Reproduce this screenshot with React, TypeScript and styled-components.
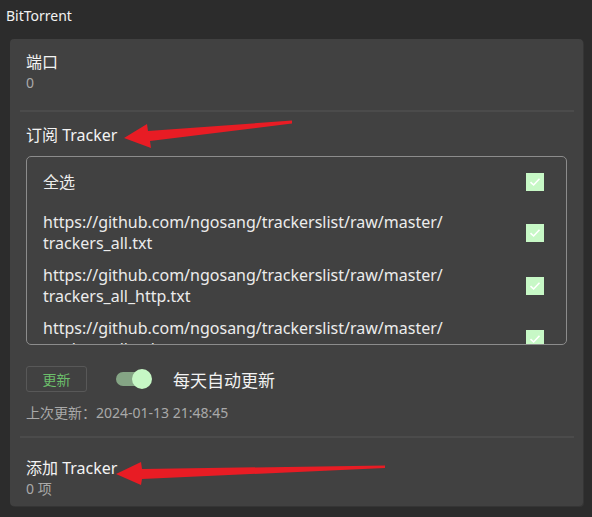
import React from 'react';
import styled, { createGlobalStyle } from 'styled-components';

const GlobalStyle = createGlobalStyle`
  html, body {
    margin: 0;
    padding: 0;
    background: #2c2c2c;
  }
  body {
    font-family: "Noto Sans", "Noto Sans CJK SC", sans-serif;
    color: #f0f0f0;
  }
`;

const Page = styled.div`
  position: relative;
  width: 592px;
  height: 517px;
  overflow: hidden;
  background: #2c2c2c;
`;

const Header = styled.div`
  padding: 6px 6px 0;
  font-size: 14px;
  line-height: 20px;
  color: #f2f2f2;
`;

const Card = styled.div`
  margin: 13px 9px 0 10px;
  background: #414141;
  border-radius: 4px;
  height: 467px;
  box-sizing: border-box;
  box-shadow: 1px 1px 0 #353535;
`;

const Section = styled.div<{ $top: number; $bottom: number }>`
  padding: ${p => p.$top}px 16px ${p => p.$bottom}px;
`;

const Title = styled.div`
  font-size: 16px;
  line-height: 22px;
  color: #f3f3f3;
`;

const Value = styled.div`
  font-size: 14px;
  line-height: 20px;
  color: #a9a9a9;
`;

const Divider = styled.div`
  height: 2px;
  margin: 0 9px 0 10px;
  background: #4b4b4b;
`;

const ListBox = styled.div`
  margin-top: 10px;
  height: 189px;
  box-sizing: border-box;
  border: 1px solid #8c8c8c;
  border-radius: 5px;
  padding: 1px 0 0;
  overflow: hidden;
`;

const Row = styled.div`
  display: flex;
  align-items: center;
  gap: 12px;
  min-height: 48px;
  box-sizing: border-box;
  padding: 5.5px 22px 5.5px 16px;
`;

const RowText = styled.div`
  flex: 1;
  font-size: 16px;
  line-height: 21px;
  color: #ececec;
`;

const Check = styled.span`
  display: flex;
  align-items: center;
  justify-content: center;
  width: 18px;
  height: 18px;
  flex: none;
  background: #c7f8c6;
`;

const Controls = styled.div`
  display: flex;
  align-items: center;
  margin-top: 21px;
`;

const UpdateButton = styled.button`
  width: 61px;
  height: 26px;
  padding: 0;
  border: 1px solid #585858;
  border-radius: 3px;
  background: transparent;
  color: #6cbf6b;
  font-family: inherit;
  font-size: 14px;
`;

const Switch = styled.span`
  position: relative;
  display: inline-block;
  width: 36px;
  height: 20px;
  margin-left: 29px;
`;

const Track = styled.span`
  position: absolute;
  left: 0;
  top: 3px;
  width: 30px;
  height: 14px;
  border-radius: 7px;
  background: #85a585;
`;

const Thumb = styled.span`
  position: absolute;
  right: 0;
  top: 0;
  width: 20px;
  height: 20px;
  border-radius: 50%;
  background: #c6f7c5;
`;

const SwitchLabel = styled.span`
  margin-left: 21px;
  font-size: 17px;
  color: #f2f2f2;
`;

const UpdatedAt = styled(Value)`
  margin-top: 11px;
`;

const Arrows = styled.svg`
  position: absolute;
  left: 0;
  top: 0;
  pointer-events: none;
`;

const CheckMark = () => (
  <svg width="14" height="14" viewBox="0 0 14 14">
    <path d="M2.5 7.2 L5.6 10 L11.5 3.8" fill="none" stroke="#ffffff" strokeWidth="1.6" />
  </svg>
);

const base = 'https://github.com/ngosang/trackerslist/raw/master/';
const trackers = ['trackers_all.txt', 'trackers_all_http.txt', 'trackers_all_udp.txt'];

export default function App() {
  return (
    <Page>
      <GlobalStyle />
      <Header>BitTorrent</Header>
      <Card>
        <Section $top={12} $bottom={17}>
          <Title>端口</Title>
          <Value>0</Value>
        </Section>
        <Divider />
        <Section $top={12} $bottom={13}>
          <Title>订阅 Tracker</Title>
          <ListBox>
            <Row>
              <RowText>全选</RowText>
              <Check><CheckMark /></Check>
            </Row>
            {trackers.map(t => (
              <Row key={t}>
                <RowText>
                  {base}
                  <br />
                  {t}
                </RowText>
                <Check><CheckMark /></Check>
              </Row>
            ))}
          </ListBox>
          <Controls>
            <UpdateButton>更新</UpdateButton>
            <Switch>
              <Track />
              <Thumb />
            </Switch>
            <SwitchLabel>每天自动更新</SwitchLabel>
          </Controls>
          <UpdatedAt>上次更新：2024-01-13 21:48:45</UpdatedAt>
        </Section>
        <Divider />
        <Section $top={19} $bottom={8}>
          <Title>添加 Tracker</Title>
          <Value>0 项</Value>
        </Section>
      </Card>
      <Arrows width="592" height="517" viewBox="0 0 592 517">
        <polygon fill="#e81c24" points="292,120.5 292,123.5 150,141 151,148 124,138 147,124 148,131" />
        <polygon fill="#e81c24" points="385,465.5 385,468 142,479 141,485 116,474 141,462 142,469" />
      </Arrows>
    </Page>
  );
}
